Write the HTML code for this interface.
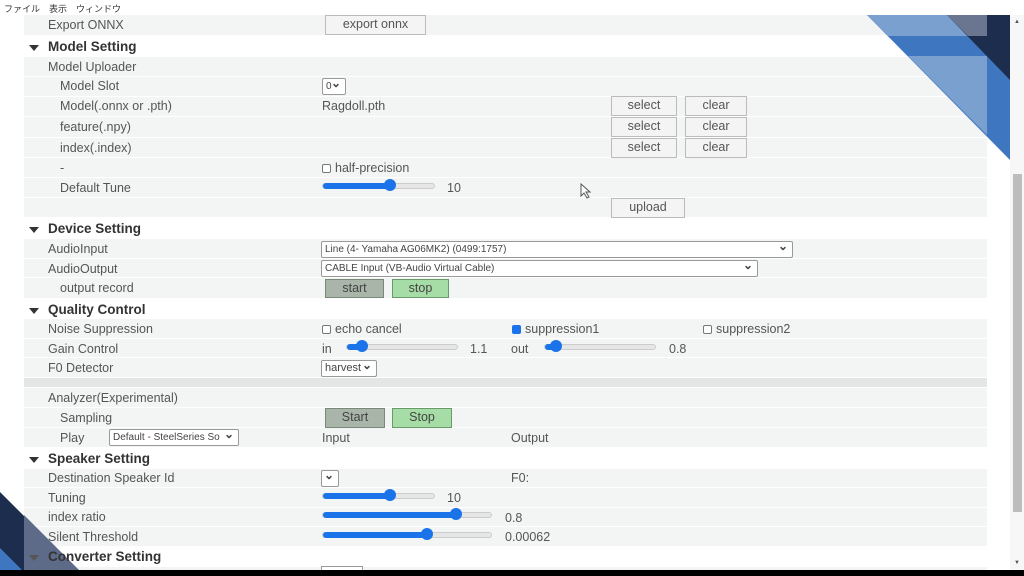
<!DOCTYPE html>
<html><head><meta charset="utf-8"><style>
*{box-sizing:border-box;margin:0;padding:0}
body{width:1024px;height:576px;overflow:hidden;background:#fff;position:relative;font-family:"Liberation Sans","Noto Sans CJK JP",sans-serif;color:#555;font-size:12.5px}
.a{position:absolute;white-space:nowrap}
.row{position:absolute;left:24px;width:963px;background:#f3f4f4;border-bottom:1px solid #fff}
.h{position:absolute;left:48px;font-weight:bold;font-size:13.5px;color:#333}
.tri{position:absolute;left:29px;width:0;height:0;border-left:5px solid transparent;border-right:5px solid transparent;border-top:6px solid #333}
.btn{position:absolute;background:#f4f4f4;border:1px solid #bbb;text-align:center;font-size:12.5px;color:#555;line-height:17px}
.gb{position:absolute;border:1px solid #7a8a7a;text-align:center;line-height:17px;font-size:12.5px;color:#444}
.sel{position:absolute;background:#fff;border:1px solid #999;border-radius:2px;font-size:10px;line-height:15px;padding-left:3px;color:#444}
.sel:after{content:"⌄";position:absolute;right:4px;top:-3px;font-size:12px;font-weight:bold}
.sl{position:absolute;height:6px;border-radius:3px;background:#e6e6e6;border:1px solid #ccc}
.sl b{position:absolute;left:0;top:-1px;height:6px;border-radius:3px;background:#1a73e8}
.sl i{position:absolute;top:-5px;width:12px;height:12px;border-radius:50%;background:#1a73e8;margin-left:-6px}
.cb{display:inline-block;width:9px;height:9px;border:1px solid #777;border-radius:2px;margin-right:4px;vertical-align:-1px;background:#fff}
.t{margin-top:1px}
</style></head><body>
<div class="a" style="left:4px;top:2px;font-size:9px;color:#333">ファイル　表示　ウィンドウ</div>

<div class="row" style="top:15px;height:21px"></div>
<div class="a" style="left:48px;top:18px">Export ONNX</div>
<div class="btn" style="left:325px;top:15px;width:101px;height:20px">export onnx</div>

<div class="tri" style="top:45px"></div><div class="h" style="top:39px">Model Setting</div>
<div class="row" style="top:57px;height:20px"></div>
<div class="row" style="top:77px;height:20px"></div>
<div class="row" style="top:97px;height:20px"></div>
<div class="row" style="top:117px;height:21px"></div>
<div class="row" style="top:138px;height:20px"></div>
<div class="row" style="top:158px;height:20px"></div>
<div class="row" style="top:178px;height:20px"></div>
<div class="row" style="top:198px;height:20px"></div>
<div class="a" style="left:48px;top:60px">Model Uploader</div>
<div class="a" style="left:60px;top:79px">Model Slot</div>
<div class="sel" style="left:322px;top:78px;width:24px;height:17px">0</div>
<div class="a" style="left:60px;top:99px">Model(.onnx or .pth)</div>
<div class="a" style="left:322px;top:99px">Ragdoll.pth</div>
<div class="a" style="left:60px;top:120px">feature(.npy)</div>
<div class="a" style="left:60px;top:141px">index(.index)</div>
<div class="a" style="left:60px;top:161px">-</div>
<div class="a" style="left:322px;top:161px"><span class="cb"></span>half-precision</div>
<div class="a" style="left:60px;top:181px">Default Tune</div>
<div class="sl" style="left:322px;top:183px;width:113px"><b style="width:67px"></b><i style="left:67px"></i></div>
<div class="a" style="left:447px;top:181px">10</div>
<div class="btn" style="left:611px;top:96px;width:66px;height:20px">select</div>
<div class="btn" style="left:685px;top:96px;width:62px;height:20px">clear</div>
<div class="btn" style="left:611px;top:117px;width:66px;height:20px">select</div>
<div class="btn" style="left:685px;top:117px;width:62px;height:20px">clear</div>
<div class="btn" style="left:611px;top:138px;width:66px;height:20px">select</div>
<div class="btn" style="left:685px;top:138px;width:62px;height:20px">clear</div>
<div class="btn" style="left:611px;top:198px;width:74px;height:20px">upload</div>
<svg class="a" style="left:580px;top:183px" width="12" height="16"><path d="M1 1 L1 13 L4 10 L7 15 L9 14 L6 9 L10 9 Z" fill="#fff" stroke="#555" stroke-width="1"/></svg>

<div class="tri" style="top:227px"></div><div class="h" style="top:221px">Device Setting</div>
<div class="row" style="top:239px;height:20px"></div>
<div class="row" style="top:259px;height:19px"></div>
<div class="row" style="top:278px;height:21px"></div>
<div class="a" style="left:48px;top:242px">AudioInput</div>
<div class="sel" style="left:321px;top:241px;width:472px;height:17px">Line (4- Yamaha AG06MK2) (0499:1757)</div>
<div class="a" style="left:48px;top:262px">AudioOutput</div>
<div class="sel" style="left:321px;top:260px;width:437px;height:17px">CABLE Input (VB-Audio Virtual Cable)</div>
<div class="a" style="left:60px;top:281px">output record</div>
<div class="gb" style="left:325px;top:279px;width:59px;height:19px;background:#a8b5a8">start</div>
<div class="gb" style="left:392px;top:279px;width:57px;height:19px;background:#a6dca6;border-color:#6a9a6a">stop</div>

<div class="tri" style="top:308px"></div><div class="h" style="top:302px">Quality Control</div>
<div class="row" style="top:319px;height:20px"></div>
<div class="row" style="top:339px;height:19px"></div>
<div class="row" style="top:358px;height:20px"></div>
<div class="row" style="top:378px;height:10px;background:#e4e6e6"></div>
<div class="a" style="left:48px;top:322px">Noise Suppression</div>
<div class="a" style="left:322px;top:322px"><span class="cb"></span>echo cancel</div>
<div class="a" style="left:512px;top:322px"><span class="cb" style="background:#1a73e8;border-color:#1a73e8"></span>suppression1</div>
<div class="a" style="left:703px;top:322px"><span class="cb"></span>suppression2</div>
<div class="a" style="left:48px;top:342px">Gain Control</div>
<div class="a" style="left:322px;top:342px">in</div>
<div class="sl" style="left:346px;top:344px;width:112px"><b style="width:15px"></b><i style="left:15px"></i></div>
<div class="a" style="left:470px;top:342px">1.1</div>
<div class="a" style="left:511px;top:342px">out</div>
<div class="sl" style="left:544px;top:344px;width:112px"><b style="width:11px"></b><i style="left:11px"></i></div>
<div class="a" style="left:669px;top:342px">0.8</div>
<div class="a" style="left:48px;top:361px">F0 Detector</div>
<div class="sel" style="left:321px;top:360px;width:56px;height:17px;font-size:11px">harvest</div>

<div class="row" style="top:388px;height:20px"></div>
<div class="row" style="top:408px;height:20px"></div>
<div class="row" style="top:428px;height:20px"></div>
<div class="a" style="left:48px;top:391px">Analyzer(Experimental)</div>
<div class="a" style="left:60px;top:411px">Sampling</div>
<div class="gb" style="left:325px;top:408px;width:60px;height:20px;background:#a8b5a8">Start</div>
<div class="gb" style="left:392px;top:408px;width:60px;height:20px;background:#a6dca6;border-color:#6a9a6a">Stop</div>
<div class="a" style="left:60px;top:431px">Play</div>
<div class="sel" style="left:109px;top:429px;width:130px;height:17px">Default - SteelSeries So</div>
<div class="a" style="left:322px;top:431px">Input</div>
<div class="a" style="left:511px;top:431px">Output</div>

<div class="tri" style="top:457px"></div><div class="h" style="top:451px">Speaker Setting</div>
<div class="row" style="top:469px;height:19px"></div>
<div class="row" style="top:488px;height:20px"></div>
<div class="row" style="top:508px;height:19px"></div>
<div class="row" style="top:527px;height:20px"></div>
<div class="a" style="left:48px;top:471px">Destination Speaker Id</div>
<div class="sel" style="left:321px;top:470px;width:18px;height:17px"></div>
<div class="a" style="left:511px;top:471px">F0:</div>
<div class="a" style="left:48px;top:491px">Tuning</div>
<div class="sl" style="left:322px;top:493px;width:113px"><b style="width:67px"></b><i style="left:67px"></i></div>
<div class="a" style="left:447px;top:491px">10</div>
<div class="a" style="left:48px;top:510px">index ratio</div>
<div class="sl" style="left:322px;top:512px;width:170px"><b style="width:133px"></b><i style="left:133px"></i></div>
<div class="a" style="left:505px;top:511px">0.8</div>
<div class="a" style="left:48px;top:530px">Silent Threshold</div>
<div class="sl" style="left:322px;top:532px;width:170px"><b style="width:104px"></b><i style="left:104px"></i></div>
<div class="a" style="left:505px;top:530px">0.00062</div>

<div class="row" style="top:567px;height:4px"></div>
<div class="a" style="left:321px;top:566px;width:42px;height:6px;border:1px solid #999;background:#fff"></div>

<div class="a" style="left:1010px;top:15px;width:14px;height:556px;background:#f7f7f7"></div>
<div class="a" style="left:1013px;top:174px;width:9px;height:338px;background:#bdbdbd"></div>
<div class="a" style="left:1014px;top:19px;font-size:6px;color:#555">▲</div>
<div class="a" style="left:1014px;top:560px;font-size:6px;color:#555">▼</div>

<svg class="a" style="left:0;top:0" width="1024" height="576">
<polygon points="867,15 1010,15 1010,160" fill="#3f76c0"/>
<polygon points="867,15 987,15 987,36 888,36" fill="#7aa0cf"/>
<polygon points="908,56 987,56 987,135" fill="#7aa0cf"/>
<polygon points="947,15 1010,15 1010,80" fill="#1c2d4e"/>
<polygon points="947,15 987,15 987,36 968,36" fill="#6a7590"/>
<polygon points="0,492 78,570 0,570" fill="#1c2d4e"/>
<polygon points="24,515 79,570 24,570" fill="#5d6b88"/>
<polygon points="0,548 22,570 0,570" fill="#3f76c0"/>
<rect x="0" y="570" width="1024" height="6" fill="#000"/>
</svg>
<div class="tri" style="top:555px;border-top-color:#555"></div><div class="h" style="top:549px">Converter Setting</div>
</body></html>
